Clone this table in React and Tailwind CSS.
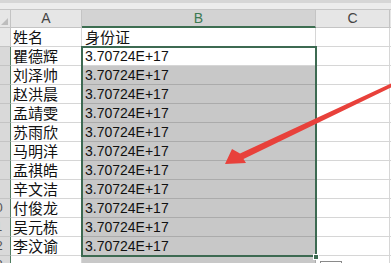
import React from 'react'

const names = ['姓名', '瞿德辉', '刘泽帅', '赵洪晨', '孟靖雯', '苏雨欣', '马明洋', '孟祺皓', '辛文洁', '付俊龙', '吴元栋', '李汶谕']

const cjk = { fontFamily: '"Noto Sans CJK SC", "Noto Sans", sans-serif' }
const latin = { fontFamily: '"Liberation Sans", Arial, sans-serif' }

function Row({ n, name, value }) {
  const selected = n >= 2
  const active = n === 2
  return (
    <div className="flex h-[19px]">
      {/* row number, mostly scrolled out of view */}
      <div
        className={`w-[11px] shrink-0 overflow-hidden border-b border-r ${
          selected ? 'bg-[#d9d9d9] border-r-[#4f7d60] border-b-[#c4c4c4]' : 'bg-[#e8e8e8] border-[#c4c4c4]'
        }`}
      >
        <div className="ml-[-19px] w-[29px] text-center text-[13px] leading-[18px] text-[#555]" style={latin}>
          {n}
        </div>
      </div>
      <div className="w-[71px] shrink-0 border-b border-r border-[#d6d6d6] bg-white pl-[2px] text-[15px] leading-[18px] text-[#111]" style={cjk}>
        {name}
      </div>
      <div
        className={`w-[234px] shrink-0 border-b border-r pl-[3px] text-[14px] leading-[18px] text-[#111] ${
          selected && !active ? 'bg-[#c8c8c8] border-[#ababab]' : 'bg-white border-[#d6d6d6]'
        }`}
        style={n === 1 ? cjk : latin}
      >
        {n === 1 ? <span className="text-[15px]">{value}</span> : value}
      </div>
      <div className="w-[74px] shrink-0 border-b border-r border-[#d6d6d6] bg-white" />
      <div className="flex-1 border-b border-[#d6d6d6] bg-white" />
    </div>
  )
}

export default function App() {
  return (
    <div className="relative h-[263px] w-[391px] overflow-hidden bg-white">
      {/* formula bar edge */}
      <div className="h-[10px] border-b border-[#c6c6c6] bg-[#ececec]">
        <div className="h-[3px] bg-[#d6d6d6]" />
      </div>

      {/* column headers */}
      <div className="flex h-[18px]" style={latin}>
        <div className="relative w-[11px] shrink-0 border-b border-r border-[#c4c4c4] bg-[#e6e6e6]">
          <div className="absolute bottom-[2px] right-[2px] h-0 w-0 border-l-[7px] border-t-[7px] border-l-transparent border-t-transparent border-r-0 border-b-[7px] border-b-[#bdbdbd]" />
        </div>
        <div className="flex w-[71px] shrink-0 items-center justify-center border-b border-r border-[#c4c4c4] bg-[#e6e6e6] text-[14px] text-[#444]">
          A
        </div>
        <div className="flex w-[234px] shrink-0 items-center justify-center border-b-2 border-r border-b-[#3d6e51] border-r-[#c4c4c4] bg-[#d3d3d3] text-[14px] text-[#3d7a52]">
          B
        </div>
        <div className="flex w-[74px] shrink-0 items-center justify-center border-b border-r border-[#c4c4c4] bg-[#e6e6e6] text-[14px] text-[#444]">
          C
        </div>
        <div className="flex-1 border-b border-[#c4c4c4] bg-[#e6e6e6]" />
      </div>

      {names.map((name, i) => (
        <Row key={i} n={i + 1} name={name} value={i === 0 ? '身份证' : '3.70724E+17'} />
      ))}
      <Row n={13} name="" value="" />

      {/* selection outline and fill handle */}
      <div className="absolute left-[81px] top-[46px] h-[211px] w-[236px] border-2 border-[#3d6a52]" />
      <div className="absolute left-[313px] top-[254px] h-[6px] w-[6px] border border-white bg-[#3d6a52]" />
      <div className="absolute left-[320px] top-[261px] h-[6px] w-[22px] border border-[#8a8a8a] bg-white" />

      {/* annotation arrow */}
      <svg className="absolute left-0 top-0" width="391" height="263" viewBox="0 0 391 263">
        <polygon
          points="225,164 232,149 240,153.5 391,83.5 391,87.5 243.5,159 246,163"
          fill="#e8413b"
        />
      </svg>
    </div>
  )
}
